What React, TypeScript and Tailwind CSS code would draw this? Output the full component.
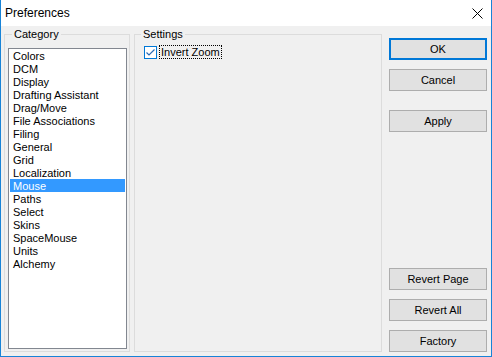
import React from 'react';

const categories = [
    'Colors',
    'DCM',
    'Display',
    'Drafting Assistant',
    'Drag/Move',
    'File Associations',
    'Filing',
    'General',
    'Grid',
    'Localization',
    'Mouse',
    'Paths',
    'Select',
    'Skins',
    'SpaceMouse',
    'Units',
    'Alchemy',
];

const Button: React.FC<{ label: string; isDefault?: boolean; className?: string }> = ({
    label,
    isDefault = false,
    className = '',
}) => (
    <button
        className={`w-[98px] h-[22px] flex items-center justify-center bg-[#e1e1e1] text-black leading-none ${
            isDefault ? 'border-2 border-[#0078d7]' : 'border border-[#adadad]'
        } ${className}`}
    >
        {label}
    </button>
);

export default function App() {
    return (
        <div className="w-[492px] h-[357px] flex flex-col bg-[#f0f0f0] border-x border-b border-[#1883d7] font-['Liberation_Sans',Arial,sans-serif] text-[11px] text-black">
            {/* title bar */}
            <div className="h-[26px] bg-white flex items-center justify-between pl-[4px] pr-[8px] shrink-0">
                <span className="text-[12px] leading-none">Preferences</span>
                <svg width="11" height="11" viewBox="0 0 11 11" className="mt-[1px]">
                    <path d="M0.5 0.5 L10.5 10.5 M10.5 0.5 L0.5 10.5" stroke="#000" strokeWidth="1" />
                </svg>
            </div>

            <div className="flex-1 flex pl-[3px] pr-[4px] pt-[2px] min-h-0">
                {/* Category */}
                <fieldset className="w-[126px] mb-[4px] border border-[#dcdcdc] pl-[3px] pr-[2px] pt-[7px] pb-[2px] flex flex-col min-h-0">
                    <legend className="ml-[4px] px-[2px] leading-[13px]">Category</legend>
                    <div className="flex-1 bg-white border border-[#828790] px-[1px]">
                        {categories.map((c) => (
                            <div
                                key={c}
                                className={`h-[13px] leading-[14px] pl-[3px] whitespace-nowrap ${
                                    c === 'Mouse' ? 'bg-[#3399ff] text-white' : ''
                                }`}
                            >
                                {c}
                            </div>
                        ))}
                    </div>
                </fieldset>

                {/* Settings */}
                <fieldset className="w-[248px] ml-[4px] mb-[4px] border border-[#dcdcdc] px-[3px] pt-[4px]">
                    <legend className="ml-[3px] px-[2px] leading-[13px]">Settings</legend>
                    <div className="flex items-center pl-[6px]">
                        <div className="w-[13px] h-[13px] border border-[#0078d7] bg-white flex items-center justify-center">
                            <svg width="11" height="11" viewBox="0 0 11 11">
                                <path d="M1.5 5.5 L4 8 L9.5 2.5" fill="none" stroke="#2a6ab5" strokeWidth="1.2" />
                            </svg>
                        </div>
                        <span className="ml-[2px] px-[1px] h-[14px] leading-[12px] border border-dotted border-black">
                            Invert Zoom
                        </span>
                    </div>
                </fieldset>

                {/* buttons */}
                <div className="ml-[7px] pt-[10px] pb-[4px] flex flex-col">
                    <Button label="OK" isDefault />
                    <Button label="Cancel" className="mt-[9px]" />
                    <Button label="Apply" className="mt-[19px]" />
                    <div className="flex-1" />
                    <Button label="Revert Page" />
                    <Button label="Revert All" className="mt-[9px]" />
                    <Button label="Factory" className="mt-[9px]" />
                </div>
            </div>
        </div>
    );
}
